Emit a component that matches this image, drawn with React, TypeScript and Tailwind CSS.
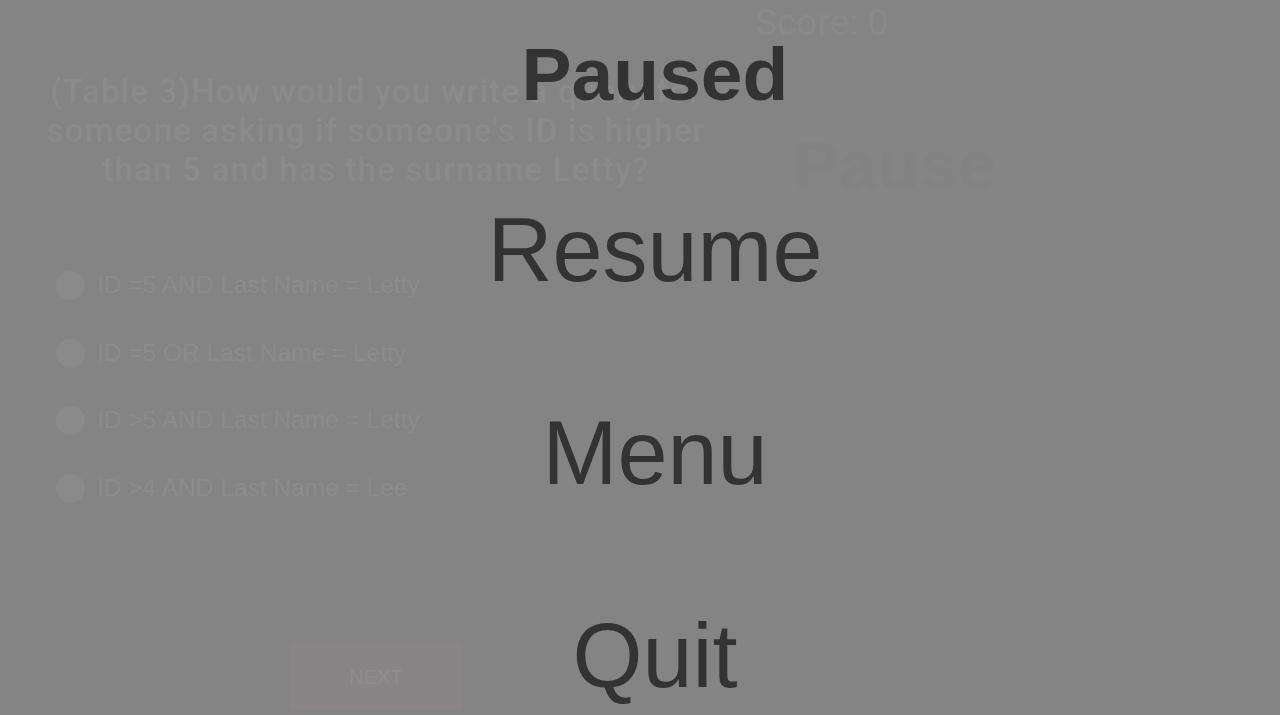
const options = [
  "ID =5 AND Last Name = Letty",
  "ID =5 OR Last Name = Letty",
  "ID >5 AND Last Name = Letty",
  "ID >4 AND Last Name = Lee",
];

const menuItems = ["Resume", "Menu", "Quit"];

export default function App() {
  return (
    <div className="relative flex h-[715px] w-[1280px] overflow-hidden bg-[#848484]">
      {/* quiz screen underneath the pause overlay */}
      <div className="flex w-[752px] shrink-0 flex-col">
        <p className="whitespace-nowrap pt-[72px] text-center text-[33px] font-medium leading-[39px] tracking-[1.2px] text-[#8b8b8b] [font-family:Roboto,'Liberation_Sans',sans-serif]">
          (Table 3)How would you write a query for
          <br />
          someone asking if someone's ID is higher
          <br />
          than 5 and has the surname Letty?
        </p>

        <div className="mt-[63px] flex flex-col pl-[56px]">
          {options.map((option) => (
            <div className="flex h-[67.5px] items-center gap-3" key={option}>
              <span className="h-[29px] w-[29px] rounded-full bg-[#8a8a8a]" />
              <span className="text-[24.5px] text-[#8c8c8c] [font-family:'Liberation_Sans',Arial,sans-serif]">
                {option}
              </span>
            </div>
          ))}
        </div>

        <div className="mt-[121px] flex justify-center">
          <button
            className="flex h-[67px] w-[172px] items-center justify-center bg-[#898486] text-[20px] text-[#8e8e8e] [font-family:'Liberation_Sans',Arial,sans-serif]"
            type="button"
          >
            NEXT
          </button>
        </div>
      </div>

      <div className="flex flex-1 flex-col">
        <p className="pl-[3px] pt-[4px] text-[37px] leading-[37px] text-[#8a8a8a] [font-family:Roboto,'Liberation_Sans',sans-serif]">
          Score: 0
        </p>
        <div className="-ml-[25px] mt-[76px] flex h-[96px] w-[285px] items-center border-l border-[#868686] pl-[65px]">
          <span className="text-[69px] font-bold leading-none text-[#828282] [font-family:'Liberation_Sans',Arial,sans-serif]">
            Pause
          </span>
        </div>
      </div>

      {/* pause overlay */}
      <div className="absolute inset-0 flex flex-col items-center overflow-hidden pl-[30px] text-[#333333] [font-family:'Liberation_Sans',Arial,sans-serif]">
        <h1 className="h-[149px] shrink-0 text-[75px] font-bold leading-[149px]">
          Paused
        </h1>
        {menuItems.map((item) => (
          <button
            className="h-[203px] shrink-0 text-[90px] leading-[203px]"
            key={item}
            type="button"
          >
            {item}
          </button>
        ))}
      </div>
    </div>
  );
}
